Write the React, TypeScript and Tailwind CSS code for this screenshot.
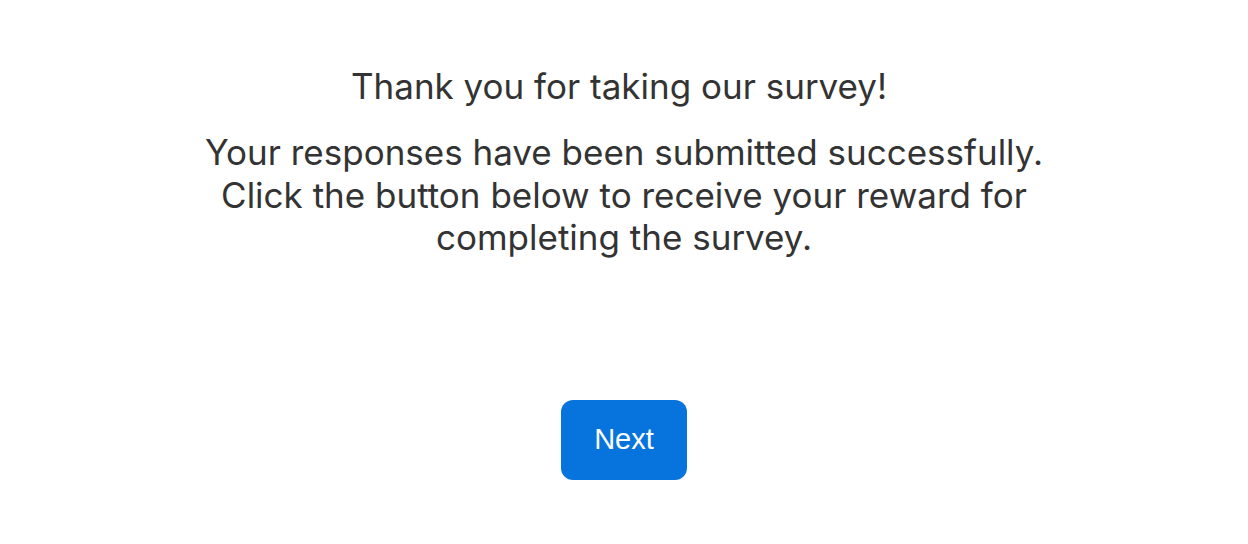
export default function App() {
  return (
    <div className="w-[1248px] h-[544px] bg-white flex flex-col items-center text-[#333333] font-['Inter',sans-serif]">
      <h1 className="mt-[62px] pr-[10px] text-[35px] leading-[48px] font-normal">Thank you for taking our survey!</h1>
      <p className="mt-[21px] w-[880px] text-center text-[35px] leading-[42.5px]">
        Your responses have been submitted successfully. Click the button below to receive your reward for completing
        the survey.
      </p>
      <button
        type="button"
        className="mt-[141px] w-[126px] h-[80px] rounded-[12px] bg-[#0774de] text-white text-[29px] font-['Liberation_Sans',sans-serif]"
      >
        Next
      </button>
    </div>
  )
}
